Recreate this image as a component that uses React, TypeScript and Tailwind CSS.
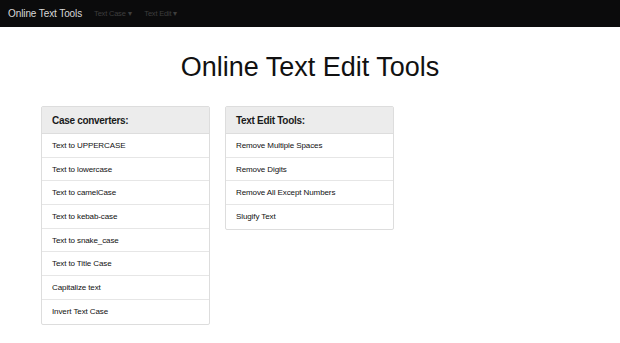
const caseItems = [
  "Text to UPPERCASE",
  "Text to lowercase",
  "Text to camelCase",
  "Text to kebab-case",
  "Text to snake_case",
  "Text to Title Case",
  "Capitalize text",
  "Invert Text Case",
];

const editItems = [
  "Remove Multiple Spaces",
  "Remove Digits",
  "Remove All Except Numbers",
  "Slugify Text",
];

function Card({ title, items }: { title: string; items: string[] }) {
  return (
    <div className="w-[169px] border border-[#dddddd] rounded-[2px] bg-white">
      <div className="h-[27px] flex items-center px-[10px] bg-[#ececec] border-b border-[#dddddd] text-[10px] font-bold tracking-[-0.3px] text-[#1a1a1a]">
        {title}
      </div>
      {items.map((it, i) => (
        <div
          key={it}
          className={`h-[23.7px] flex items-center pt-[1px] px-[10px] text-[8px] tracking-[-0.1px] text-[#111] ${
            i < items.length - 1 ? "border-b border-[#e6e6e6]" : ""
          }`}
        >
          {it}
        </div>
      ))}
    </div>
  );
}

export default function App() {
  return (
    <div className="w-[620px] h-[343px] bg-white font-['Liberation_Sans',Arial,sans-serif]">
      {/* navbar */}
      <div className="h-[27px] bg-[#0b0b0c] flex items-center px-[8px]">
        <span className="text-[10px] tracking-[-0.1px] text-[#d8d8d8]">Online Text Tools</span>
        <span className="ml-[12px] text-[7.5px] tracking-[-0.2px] text-[#3e3e3e]">Text Case ▾</span>
        <span className="ml-[13px] text-[7.5px] tracking-[-0.2px] text-[#3e3e3e]">Text Edit ▾</span>
      </div>

      <h1 className="text-center text-[27px] leading-none mt-[27px] text-[#111]">
        Online Text Edit Tools
      </h1>

      <div className="flex gap-[15px] items-start pl-[41px] mt-[25px]">
        <Card title="Case converters:" items={caseItems} />
        <Card title="Text Edit Tools:" items={editItems} />
      </div>
    </div>
  );
}
